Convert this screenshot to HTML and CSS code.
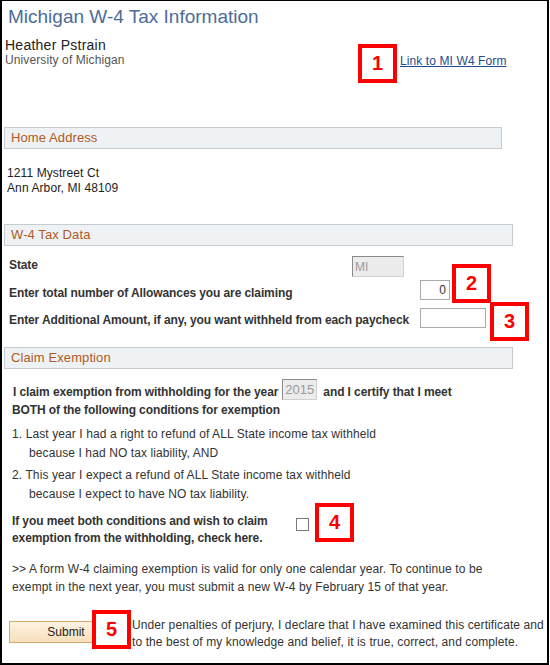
FILE: index.html
```html
<!DOCTYPE html>
<html lang="en">
<head>
  <meta charset="UTF-8">
  <title>Michigan W-4 Tax Information</title>
  <link rel="stylesheet" href="styles.css">
</head>
<body>
  <div class="frame">
    <h1 class="page-title">Michigan W-4 Tax Information</h1>

    <div class="identity">
      <div class="who">
        <div class="who-name">Heather Pstrain</div>
        <div class="who-org">University of Michigan</div>
      </div>
      <a href="#" class="form-link">Link to MI W4 Form</a>
    </div>

    <div class="section-head section-short">Home Address</div>
    <div class="address">
      1211 Mystreet Ct<br>
      Ann Arbor, MI 48109
    </div>

    <div class="section-head">W-4 Tax Data</div>
    <div class="tax-rows">
      <div class="tax-row row-state">
        <label class="field-label">State</label>
        <input type="text" class="field field-ro field-state" value="MI" readonly>
      </div>
      <div class="tax-row row-allow">
        <label class="field-label">Enter total number of Allowances you are claiming</label>
        <input type="text" class="field field-allow" value="0">
      </div>
      <div class="tax-row row-extra">
        <label class="field-label">Enter Additional Amount, if any, you want withheld from each paycheck</label>
        <input type="text" class="field field-extra" value="">
      </div>
    </div>

    <div class="section-head section-claim">Claim Exemption</div>
    <div class="claim-line">
      <span class="strong">I claim exemption from withholding for the year</span>
      <input type="text" class="field field-ro field-year" value="2015" readonly>
      <span class="strong">and I certify that I meet</span>
    </div>
    <div class="strong both">BOTH of the following conditions for exemption</div>

    <ol class="conditions">
      <li>1. Last year I had a right to refund of ALL State income tax withheld<br><span class="indent">because I had NO tax liability, AND</span></li>
      <li>2. This year I expect a refund of ALL State income tax withheld<br><span class="indent">because I expect to have NO tax liability.</span></li>
    </ol>

    <div class="check-row">
      <label class="strong check-label" for="exempt">If you meet both conditions and wish to claim<br>exemption from the withholding, check here.</label>
      <input type="checkbox" id="exempt" class="check">
    </div>

    <p class="note">&gt;&gt; A form W-4 claiming exemption is valid for only one calendar year. To continue to be<br>exempt in the next year, you must submit a new W-4 by February 15 of that year.</p>

    <div class="submit-row">
      <button class="btn-submit">Submit</button>
      <p class="perjury">Under penalties of perjury, I declare that I have examined this certificate and<br>to the best of my knowledge and belief, it is true, correct, and complete.</p>
    </div>

    <span class="callout callout-1">1</span>
    <span class="callout callout-2">2</span>
    <span class="callout callout-3">3</span>
    <span class="callout callout-4">4</span>
    <span class="callout callout-5">5</span>
  </div>
</body>
</html>
```

FILE: styles.css
```css
:root {
  --text: #333333;
  --title: #4c6c9a;
  --head-text: #b05a22;
  --head-bg: #eef2f4;
  --head-border: #c5cbd0;
  --link: #224c8e;
  --callout: #ff0000;
}

* {
  margin: 0;
  padding: 0;
  box-sizing: border-box;
}

body {
  background: #fff;
  color: var(--text);
  font-family: 'Liberation Sans', Arial, sans-serif;
  font-size: 12px;
  line-height: 15px;
  letter-spacing: 0.1px;
}

.frame {
  position: relative;
  width: 549px;
  height: 665px;
  border: 2px solid #000;
  border-top-width: 1px;
}

.page-title {
  margin: 5px 0 0 6px;
  font-size: 19px;
  line-height: 22px;
  font-weight: normal;
  letter-spacing: 0;
  color: var(--title);
}

.identity {
  display: flex;
  align-items: flex-end;
  margin: 9px 0 0 3px;
}

.who {
  width: 395px;
}

.who-name {
  font-size: 14px;
  line-height: 16px;
  letter-spacing: 0.25px;
  color: #222;
}

.who-org {
  color: #555;
}

.form-link {
  color: var(--link);
  text-decoration: underline;
  margin-bottom: -1px;
}

.section-head {
  margin: 28px 0 0 2px;
  width: 509px;
  height: 22px;
  padding-left: 6px;
  background: var(--head-bg);
  border: 1px solid var(--head-border);
  color: var(--head-text);
  font-size: 13px;
  line-height: 20px;
}

.section-short {
  margin-top: 59px;
  width: 498px;
}

.section-claim {
  margin-top: 13px;
}

.address {
  margin: 17px 0 0 5px;
  color: #222;
}

.tax-rows {
  margin: 6px 0 0 7px;
}

.tax-row {
  display: flex;
  align-items: flex-start;
  height: 27px;
}

.row-state {
  height: 28px;
}

.field-label {
  width: 411px;
  padding-top: 6px;
  font-weight: bold;
  letter-spacing: -0.1px;
}

.row-state .field-label {
  width: 343px;
}

.field {
  height: 20px;
  border: 1px solid #a9a9a9;
  background: #fff;
  color: var(--text);
  font-family: inherit;
  font-size: 12px;
  padding: 0 3px;
  outline: none;
}

.field-ro {
  background: #ececec;
  color: #9a9a9a;
  border-color: #8a8a8a #d0d0d0 #d0d0d0 #8a8a8a;
  padding: 0 2px;
}

.field-state {
  width: 52px;
  height: 21px;
  margin-top: 4px;
}

.field-allow {
  width: 30px;
  text-align: right;
}

.field-extra {
  width: 66px;
  margin-top: 1px;
}

.strong {
  font-weight: bold;
  letter-spacing: -0.1px;
}

.claim-line {
  display: flex;
  align-items: flex-start;
  height: 21px;
  margin: 10px 0 0 11px;
}

.claim-line .strong {
  padding-top: 6px;
}

.field-year {
  width: 35px;
  height: 21px;
  margin: 0 6px 0 4px;
  font-size: 13px;
}

.both {
  margin: 3px 0 0 10px;
}

.conditions {
  list-style: none;
  margin-left: 10px;
}

.conditions li {
  margin-top: 3px;
  line-height: 19px;
}

.conditions li:first-child {
  margin-top: 7px;
}

.indent {
  padding-left: 17px;
}

.check-row {
  display: flex;
  align-items: flex-start;
  margin: 9px 0 0 10px;
}

.check-label {
  width: 284px;
  line-height: 17px;
}

.check {
  appearance: none;
  width: 13px;
  height: 13px;
  margin-top: 5px;
  border: 1px solid #7a7a7a;
  background: #fff;
}

.note {
  margin: 13px 0 0 10px;
  line-height: 18px;
}

.submit-row {
  display: flex;
  align-items: flex-start;
  margin: 21px 0 0 7px;
}

.btn-submit {
  width: 114px;
  height: 22px;
  margin-top: 4px;
  margin-right: 9px;
  border: 1px solid #d9a872;
  background: linear-gradient(#fdf3e3, #f8dfbb);
  color: #222;
  font-family: inherit;
  font-size: 12px;
  text-align: center;
}

.perjury {
  line-height: 17px;
}

/* numbered annotation boxes laid over the form */
.callout {
  position: absolute;
  width: 39px;
  height: 39px;
  border: 4px solid var(--callout);
  background: #fff;
  color: var(--callout);
  font-size: 20px;
  font-weight: bold;
  line-height: 31px;
  letter-spacing: 0;
  text-align: center;
}

.callout-1 { left: 356px; top: 43px; }
.callout-2 { left: 450px; top: 263px; }
.callout-3 { left: 488px; top: 301px; }
.callout-4 { left: 313px; top: 502px; }
.callout-5 { left: 90px; top: 609px; }
```
